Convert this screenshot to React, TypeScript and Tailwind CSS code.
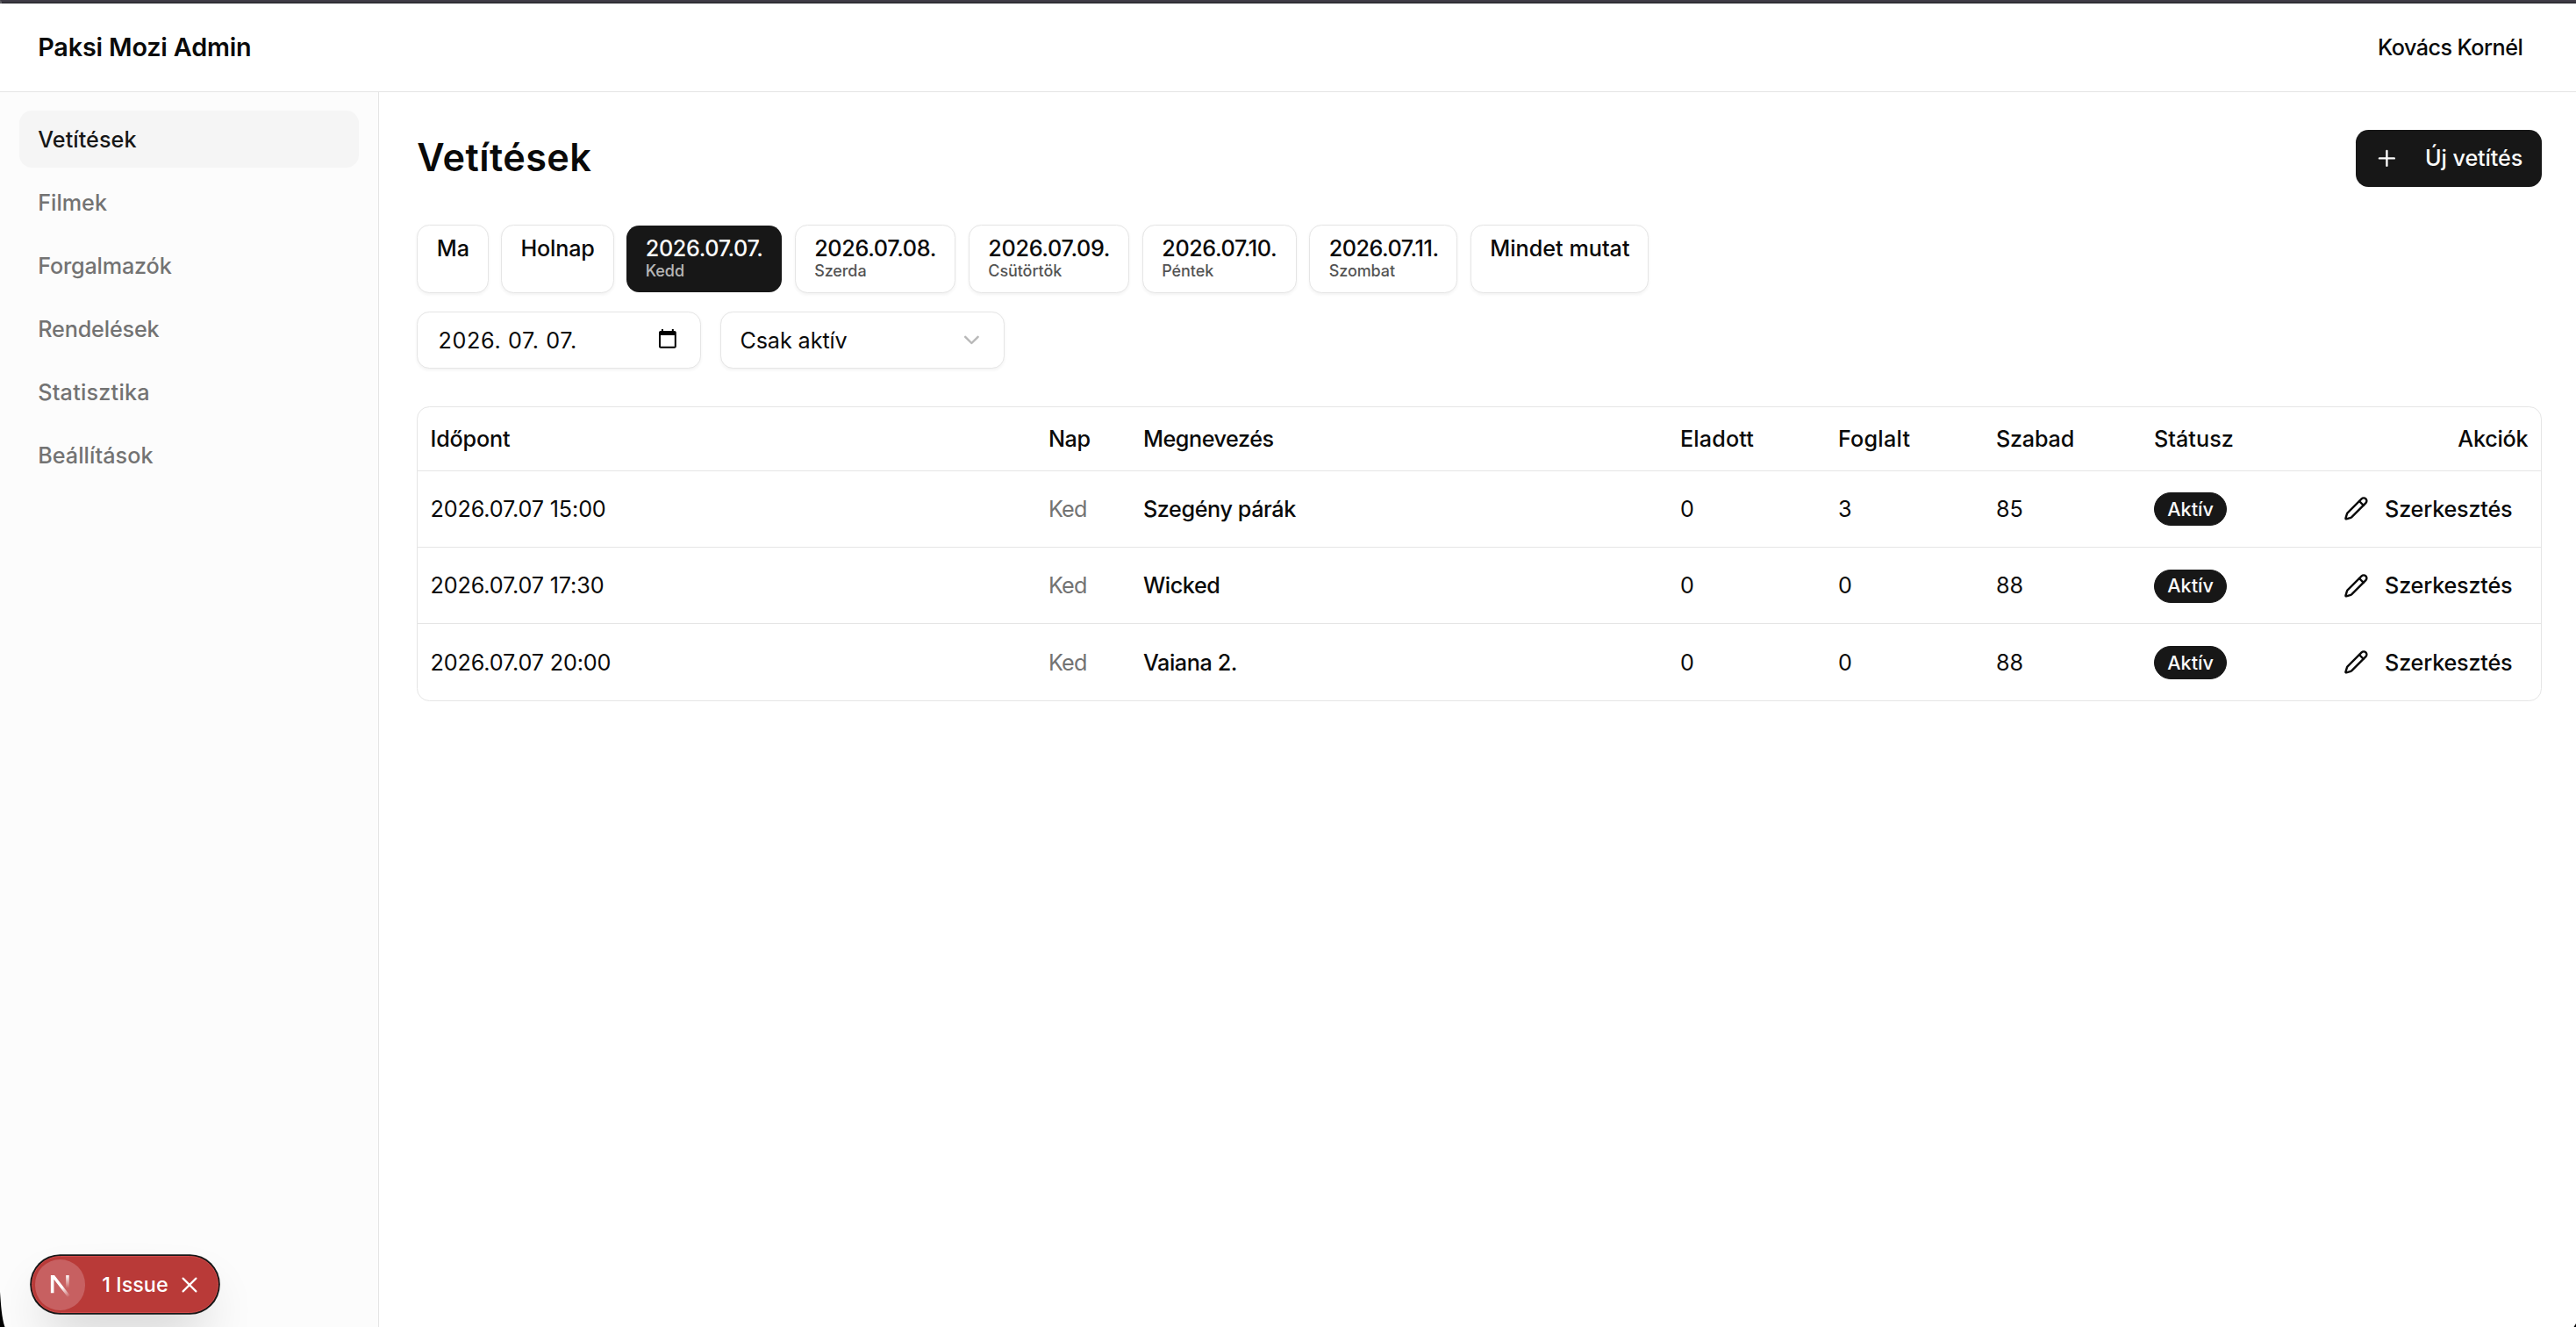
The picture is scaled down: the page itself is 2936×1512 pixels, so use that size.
import { ReactNode } from "react";
import { ChevronDown, Pencil, Plus } from "lucide-react";
import clsx from "clsx";

const navItems = [
  { label: "Vetítések", tracking: "tracking-[0.003em]", active: true },
  { label: "Filmek", tracking: "tracking-normal" },
  { label: "Forgalmazók", tracking: "tracking-[-0.007em]" },
  { label: "Rendelések", tracking: "tracking-[-0.006em]" },
  { label: "Statisztika", tracking: "tracking-[0.009em]" },
  { label: "Beállítások", tracking: "tracking-[0.002em]" },
];

const dayFilters = [
  { label: "Ma", day: "", className: "w-[45.2px]" },
  { label: "Holnap", day: "", className: "w-[71.6px] tracking-[-0.007em]" },
  { label: "2026.07.07.", day: "Kedd", className: "w-[98.3px] tracking-[-0.013em]", active: true },
  { label: "2026.07.08.", day: "Szerda", className: "w-[102.1px] tracking-[-0.011em]" },
  { label: "2026.07.09.", day: "Csütörtök", className: "w-[102px] tracking-[-0.011em]" },
  { label: "2026.07.10.", day: "Péntek", className: "w-[97.8px] tracking-[-0.014em]" },
  { label: "2026.07.11.", day: "Szombat", className: "w-[94px] tracking-[-0.017em]" },
  { label: "Mindet mutat", day: "", className: "w-[112.8px]" },
];

const screenings = [
  { time: "2026.07.07 15:00", day: "Ked", title: "Szegény párák", sold: 0, reserved: 3, free: 85 },
  { time: "2026.07.07 17:30", day: "Ked", title: "Wicked", sold: 0, reserved: 0, free: 88 },
  { time: "2026.07.07 20:00", day: "Ked", title: "Vaiana 2.", sold: 0, reserved: 0, free: 88 },
];

function Header() {
  return (
    <header className="flex h-14 shrink-0 items-center justify-between border-b border-neutral-200 bg-white pr-[33.8px] pl-6">
      <span className="text-base font-semibold tracking-[-0.006em]">Paksi Mozi Admin</span>
      <span className="text-sm font-medium tracking-[-0.022em]">Kovács Kornél</span>
    </header>
  );
}

function Sidebar() {
  return (
    <aside className="w-60 shrink-0 border-r border-neutral-200 bg-[#fcfcfc] p-3">
      <nav className="flex flex-col gap-1">
        {navItems.map((item) => (
          <a
            key={item.label}
            className={clsx(
              "rounded-lg px-3 py-2 text-sm font-medium",
              item.tracking,
              item.active ? "bg-neutral-100 text-neutral-900" : "text-neutral-500"
            )}
          >
            {item.label}
          </a>
        ))}
      </nav>
    </aside>
  );
}

function DayFilters() {
  return (
    <div className="flex items-center gap-2">
      {dayFilters.map((f) => (
        <button
          key={f.label}
          className={clsx(
            "flex flex-col items-start rounded-lg px-3 py-2 text-left font-medium whitespace-nowrap",
            f.className,
            f.active ? "bg-neutral-900 text-neutral-50" : "border border-neutral-200 bg-white shadow-xs"
          )}
        >
          <span className="text-sm leading-none">{f.label}</span>
          <span className="mt-0.5 h-2.5 text-[10px] leading-none tracking-[-0.005em] opacity-70">{f.day}</span>
        </button>
      ))}
    </div>
  );
}

function CalendarIcon() {
  return (
    <svg viewBox="0 0 24 24" className="mr-[2.2px] mb-[1.5px] size-[13.2px]" fill="black">
      <path d="M20 3h-1V1h-2v2H7V1H5v2H4c-1.1 0-2 .9-2 2v16c0 1.1.9 2 2 2h16c1.1 0 2-.9 2-2V5c0-1.1-.9-2-2-2zm0 18H4V8h16v13z" />
    </svg>
  );
}

function Field({ children }: { children: ReactNode }) {
  return (
    <div className="flex h-9 w-[180px] items-center justify-between rounded-lg border border-neutral-200 bg-white px-3 text-sm shadow-xs">
      {children}
    </div>
  );
}

function ScreeningTable() {
  return (
    <div className="overflow-hidden rounded-lg border border-neutral-200">
      <table className="w-full table-fixed text-left text-sm">
        <colgroup>
          <col className="w-[391.3px]" />
          <col className="w-[60px]" />
          <col className="w-[340px]" />
          <col className="w-[100px]" />
          <col className="w-[100px]" />
          <col className="w-[100px]" />
          <col className="w-[100px]" />
          <col />
        </colgroup>
        <thead>
          <tr className="h-10 border-b border-neutral-200 [&>th]:px-2 [&>th]:font-medium">
            <th className="tracking-[-0.008em]">Időpont</th>
            <th className="tracking-[-0.015em]">Nap</th>
            <th className="tracking-[-0.018em]">Megnevezés</th>
            <th className="tracking-[0.006em]">Eladott</th>
            <th className="tracking-[0.009em]">Foglalt</th>
            <th className="tracking-[-0.008em]">Szabad</th>
            <th className="tracking-[0.002em]">Státusz</th>
            <th className="text-right tracking-[-0.01em]">Akciók</th>
          </tr>
        </thead>
        <tbody>
          {screenings.map((s) => (
            <tr key={s.time} className="border-b border-neutral-200 last:border-0 [&>td]:p-2">
              <td className="tracking-[-0.006em]">{s.time}</td>
              <td className="tracking-[-0.03em] text-neutral-500">{s.day}</td>
              <td className="font-medium tracking-[-0.016em]">{s.title}</td>
              <td>{s.sold}</td>
              <td>{s.reserved}</td>
              <td>{s.free}</td>
              <td>
                <span className="inline-flex rounded-full border border-neutral-900 bg-neutral-900 px-2 py-0.5 align-middle text-xs font-medium text-neutral-50">
                  Aktív
                </span>
              </td>
              <td>
                <button className="ml-auto flex h-8 items-center gap-2.5 px-2.5 font-medium tracking-[-0.008em]">
                  <Pencil className="size-4" />
                  Szerkesztés
                </button>
              </td>
            </tr>
          ))}
        </tbody>
      </table>
    </div>
  );
}

function IssueBadge() {
  return (
    <div className="absolute bottom-[8.8px] left-5 flex h-9 w-[118.4px] items-center rounded-full border border-[#d04a4a] bg-[#b93a38] pl-[1.6px] text-[13px] font-medium text-white shadow-[0_0_0_1px_#171717,0_16px_32px_-8px_rgba(0,0,0,0.24)]">
      <span className="flex size-8 items-center justify-center rounded-full bg-[#c76061]">
        <svg viewBox="0 0 58 58" className="size-8" fill="none">
          <defs>
            <linearGradient id="stem" x1="0" y1="18" x2="0" y2="33" gradientUnits="userSpaceOnUse">
              <stop stopColor="white" />
              <stop offset="1" stopColor="white" stopOpacity="0" />
            </linearGradient>
            <linearGradient id="diagonal" x1="31" y1="32" x2="39" y2="43" gradientUnits="userSpaceOnUse">
              <stop stopColor="white" />
              <stop offset="1" stopColor="white" stopOpacity="0" />
            </linearGradient>
          </defs>
          <path d="M18 18.2h4.2L40 41.3l-2.6 2L21.6 22.8v15.7H18z" fill="url(#diagonal)" />
          <path d="M35.4 18.2H39v15.6h-3.6z" fill="url(#stem)" />
        </svg>
      </span>
      <span className="ml-[10.5px]">1 Issue</span>
      <svg viewBox="0 0 18 18" className="ml-[8.7px] size-[10px]" stroke="white" strokeWidth="2.2" strokeLinecap="round">
        <path d="M1.6 1.6l14.8 14.8M16.4 1.6L1.6 16.4" />
      </svg>
    </div>
  );
}

export default function App() {
  return (
    <div className="relative flex h-screen flex-col overflow-hidden bg-white font-[Inter,sans-serif] text-neutral-950">
      <div className="h-1 shrink-0 border-t-2 border-l-2 border-t-[#3f3c46] border-l-[#5c5b60] bg-[#302f36]" />
      <div className="relative flex min-h-0 flex-1 flex-col [zoom:1.8]">
        <Header />
        <div className="flex min-h-0 flex-1">
          <Sidebar />
          <main className="flex min-w-0 flex-1 flex-col gap-6 py-6 pr-[21.8px] pl-6">
            <div className="flex items-center justify-between">
              <h1 className="pb-px text-2xl leading-[35px] font-semibold tracking-[0.01em]">Vetítések</h1>
              <button className="flex h-9 items-center gap-4 rounded-lg bg-neutral-900 px-3 text-sm font-medium tracking-[-0.004em] text-neutral-50">
                <Plus className="size-4" />
                Új vetítés
              </button>
            </div>
            <div className="flex flex-col gap-3">
              <DayFilters />
              <div className="flex gap-3">
                <Field>
                  <span className="pl-px tracking-[0.024em]">2026. 07. 07.</span>
                  <CalendarIcon />
                </Field>
                <Field>
                  <span className="tracking-[-0.004em]">Csak aktív</span>
                  <ChevronDown className="size-4 text-neutral-500 opacity-50" />
                </Field>
              </div>
            </div>
            <ScreeningTable />
          </main>
        </div>
        <IssueBadge />
      </div>
      {/* rounded window corners */}
      <svg viewBox="0 0 6 40" className="absolute bottom-0 left-0 h-10 w-1.5">
        <path d="M0 0C1 14 2 30 5.5 40H0z" fill="black" />
      </svg>
      <svg viewBox="0 0 3 4" className="absolute right-0 bottom-0 h-1 w-[3px]">
        <path d="M3 0v4H0.5z" fill="black" />
      </svg>
    </div>
  );
}
